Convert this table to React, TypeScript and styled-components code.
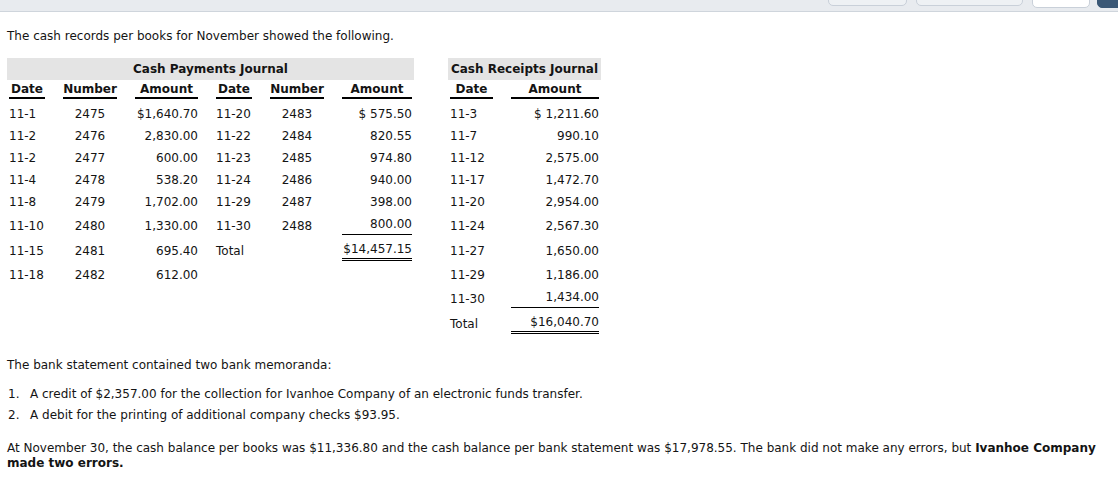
import React from "react";
import styled, { createGlobalStyle } from "styled-components";

const Global = createGlobalStyle`
  html, body { margin: 0; padding: 0; background: #fff; }
  body { font-family: "DejaVu Sans", Verdana, sans-serif; font-size: 12px; color: #141414; }
`;

const TopBar = styled.div`
  height: 11px;
  border-bottom: 1px solid #cfd5dc;
  background: #e8ebef;
  overflow: hidden;
  display: flex;
  justify-content: flex-end;
  align-items: flex-end;
`;

const BarButton = styled.div<{ $w: number; $drop: number; $dark?: boolean; $white?: boolean }>`
  width: ${(p) => p.$w}px;
  height: 30px;
  box-sizing: border-box;
  margin-left: ${(p) => (p.$dark ? 7 : 9)}px;
  margin-right: ${(p) => (p.$dark ? -20 : 0)}px;
  margin-bottom: ${(p) => 5 - p.$drop}px;
  border: 1px solid ${(p) => (p.$dark ? "#3b5876" : "#c9d0d9")};
  border-radius: 5px;
  background: ${(p) => (p.$dark ? "#3b5876" : p.$white ? "#fff" : "#eef1f4")};
  flex-shrink: 0;
`;

const Page = styled.div`
  padding: 0 7px;
`;

const Intro = styled.p`
  margin: 16px 0 14px;
  line-height: 16px;
`;

const Journal = styled.table`
  border-collapse: separate;
  border-spacing: 0;
  line-height: 16px;
`;

const Band = styled.th`
  background: #e4e4e4;
  font-weight: bold;
  height: 22px;
  padding: 0 2px;
  text-align: center;
  white-space: nowrap;
`;

const Cell = styled.td<{ $align?: "left" | "right" | "center"; $first?: boolean; $last?: boolean; $w?: number }>`
  padding: 3px ${(p) => (p.$last ? 2 : 9)}px 3px ${(p) => (p.$first ? 2 : 9)}px;
  text-align: ${(p) => p.$align || "left"};
  vertical-align: middle;
  white-space: nowrap;
  ${(p) => (p.$w ? `width: ${p.$w}px;` : "")}
`;

const HeadCell = styled(Cell).attrs({ as: "th" })`
  font-weight: bold;
  padding-top: 1px;
  padding-bottom: 4px;
  text-align: center;
`;

const HeadLabel = styled.span`
  display: block;
  border-bottom: 2px solid #000;
`;

const Spacer = styled.td`
  width: 34px;
  padding: 0;
`;

const Ruled = styled.span<{ $double?: boolean }>`
  display: block;
  padding-bottom: ${(p) => (p.$double ? 1 : 2)}px;
  border-bottom: ${(p) => (p.$double ? "3px double #000" : "1px solid #000")};
`;

const Memo = styled.p`
  margin: 20px 0 0;
  line-height: 16px;
`;

const List = styled.ol`
  margin: 13px 0 0;
  padding: 0;
  list-style: none;
  display: flex;
  flex-direction: column;
  gap: 5px;
`;

const Item = styled.li`
  display: flex;
  line-height: 16px;
`;

const Num = styled.span`
  width: 22px;
  padding-left: 1px;
  flex-shrink: 0;
`;

const Closing = styled.p`
  margin: 18px 0 0;
  line-height: 15px;
`;

type Amt = { v: string; rule?: "single" | "double" };
type Row = {
  d1?: string; n1?: string; a1?: Amt;
  d2?: string; n2?: string; a2?: Amt;
  rd?: string; ra?: Amt;
};

const rows: Row[] = [
  { d1: "11-1", n1: "2475", a1: { v: "$1,640.70" }, d2: "11-20", n2: "2483", a2: { v: "$ 575.50" }, rd: "11-3", ra: { v: "$ 1,211.60" } },
  { d1: "11-2", n1: "2476", a1: { v: "2,830.00" }, d2: "11-22", n2: "2484", a2: { v: "820.55" }, rd: "11-7", ra: { v: "990.10" } },
  { d1: "11-2", n1: "2477", a1: { v: "600.00" }, d2: "11-23", n2: "2485", a2: { v: "974.80" }, rd: "11-12", ra: { v: "2,575.00" } },
  { d1: "11-4", n1: "2478", a1: { v: "538.20" }, d2: "11-24", n2: "2486", a2: { v: "940.00" }, rd: "11-17", ra: { v: "1,472.70" } },
  { d1: "11-8", n1: "2479", a1: { v: "1,702.00" }, d2: "11-29", n2: "2487", a2: { v: "398.00" }, rd: "11-20", ra: { v: "2,954.00" } },
  { d1: "11-10", n1: "2480", a1: { v: "1,330.00" }, d2: "11-30", n2: "2488", a2: { v: "800.00", rule: "single" }, rd: "11-24", ra: { v: "2,567.30" } },
  { d1: "11-15", n1: "2481", a1: { v: "695.40" }, d2: "Total", a2: { v: "$14,457.15", rule: "double" }, rd: "11-27", ra: { v: "1,650.00" } },
  { d1: "11-18", n1: "2482", a1: { v: "612.00" }, rd: "11-29", ra: { v: "1,186.00" } },
  { rd: "11-30", ra: { v: "1,434.00", rule: "single" } },
  { rd: "Total", ra: { v: "$16,040.70", rule: "double" } },
];

const AmountText = ({ a }: { a?: Amt }) => {
  if (!a) return null;
  if (a.rule) return <Ruled $double={a.rule === "double"}>{a.v}</Ruled>;
  return <>{a.v}</>;
};

export default function App() {
  return (
    <>
      <Global />
      <TopBar>
        <BarButton $w={79} $drop={0} />
        <BarButton $w={107} $drop={0} />
        <BarButton $w={58} $drop={2} $white />
        <BarButton $w={41} $drop={2} $dark />
      </TopBar>
      <Page>
        <Intro>The cash records per books for November showed the following.</Intro>
        <Journal>
          <thead>
            <tr>
              <Band colSpan={6}>Cash Payments Journal</Band>
              <Spacer />
              <Band colSpan={2}>Cash Receipts Journal</Band>
            </tr>
            <tr>
              <HeadCell $first $w={36}><HeadLabel>Date</HeadLabel></HeadCell>
              <HeadCell $w={54}><HeadLabel>Number</HeadLabel></HeadCell>
              <HeadCell $w={63}><HeadLabel>Amount</HeadLabel></HeadCell>
              <HeadCell $w={36}><HeadLabel>Date</HeadLabel></HeadCell>
              <HeadCell $w={54}><HeadLabel>Number</HeadLabel></HeadCell>
              <HeadCell $last $w={70}><HeadLabel>Amount</HeadLabel></HeadCell>
              <Spacer />
              <HeadCell $first $w={43}><HeadLabel>Date</HeadLabel></HeadCell>
              <HeadCell $last $w={88}><HeadLabel>Amount</HeadLabel></HeadCell>
            </tr>
          </thead>
          <tbody>
            {rows.map((r, i) => (
              <tr key={i}>
                <Cell $first>{r.d1}</Cell>
                <Cell $align="center">{r.n1}</Cell>
                <Cell $align="right"><AmountText a={r.a1} /></Cell>
                <Cell>{r.d2}</Cell>
                <Cell $align="center">{r.n2}</Cell>
                <Cell $align="right" $last><AmountText a={r.a2} /></Cell>
                <Spacer />
                <Cell $first>{r.rd}</Cell>
                <Cell $align="right" $last><AmountText a={r.ra} /></Cell>
              </tr>
            ))}
          </tbody>
        </Journal>
        <Memo>The bank statement contained two bank memoranda:</Memo>
        <List>
          <Item><Num>1.</Num>A credit of $2,357.00 for the collection for Ivanhoe Company of an electronic funds transfer.</Item>
          <Item><Num>2.</Num>A debit for the printing of additional company checks $93.95.</Item>
        </List>
        <Closing>
          At November 30, the cash balance per books was $11,336.80 and the cash balance per bank statement was $17,978.55. The bank did not make any errors, but <b>Ivanhoe Company made two errors.</b>
        </Closing>
      </Page>
    </>
  );
}
